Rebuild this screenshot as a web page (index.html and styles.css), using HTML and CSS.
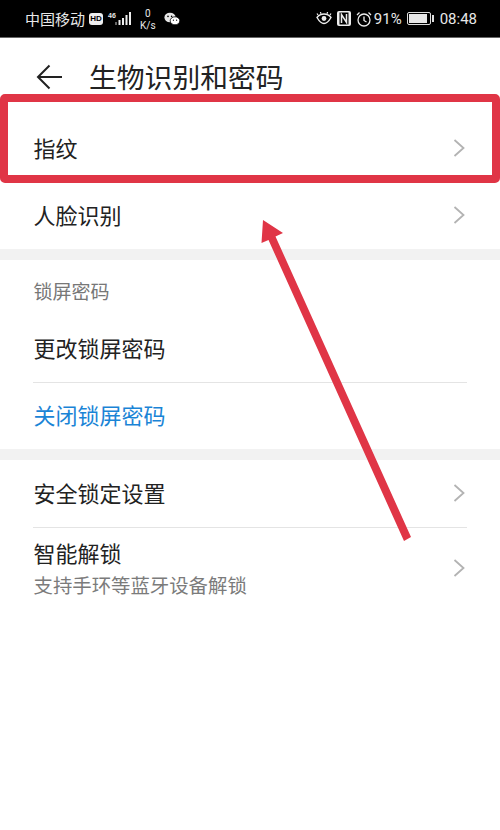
FILE: index.html
```html
<!DOCTYPE html>
<html lang="zh-CN">
<head>
    <meta charset="UTF-8">
    <meta name="viewport" content="width=device-width, initial-scale=1.0">
    <title>生物识别和密码</title>
    <link rel="stylesheet" href="styles.css">
</head>
<body>
    <div class="phone">
        <div class="status_bar">
            <div class="status_left">
                <span class="carrier">中国移动</span>
                <span class="hd_badge">HD</span>
                <span class="signal">
                    <span class="net_type">46</span>
                    <svg width="17" height="14" viewBox="0 0 17 14">
                        <rect x="0" y="10" width="2" height="3" fill="#666"/>
                        <rect x="3.5" y="8" width="2" height="5" fill="#eee"/>
                        <rect x="7" y="6" width="2" height="7" fill="#eee"/>
                        <rect x="10.5" y="3" width="2" height="10" fill="#eee"/>
                        <rect x="14" y="0" width="2" height="13" fill="#eee"/>
                    </svg>
                </span>
                <span class="speed"><span>0</span><span>K/s</span></span>
                <svg class="wechat" width="16" height="14" viewBox="0 0 16 14">
                    <ellipse cx="6" cy="5.5" rx="5.6" ry="4.8" fill="#e8e8e8"/>
                    <ellipse cx="11" cy="8.8" rx="4.8" ry="4" fill="#fff" stroke="#000" stroke-width="0.8"/>
                    <circle cx="4" cy="4.4" r="0.8" fill="#000"/>
                    <circle cx="7.6" cy="4.4" r="0.8" fill="#000"/>
                    <circle cx="9.4" cy="8.2" r="0.6" fill="#000"/>
                    <circle cx="12.6" cy="8.2" r="0.6" fill="#000"/>
                </svg>
            </div>
            <div class="status_right">
                <svg width="16" height="13" viewBox="0 0 16 13" fill="none" stroke="#eee">
                    <path d="M1 5.5C3 3 5.5 2 8 2s5 1 7 3.5C13 9 10.5 11.5 8 11.5S3 9 1 5.5z" stroke-width="1.4"/>
                    <circle cx="8" cy="6.5" r="2.4" fill="#eee" stroke="none"/>
                    <path d="M2 3 1 1.5M5 1.8 4.4 0M11 1.8 11.6 0M14 3l1-1.5" stroke-width="1.2"/>
                </svg>
                <svg class="nfc" width="14" height="15" viewBox="0 0 14 15">
                    <rect x="0" y="0" width="14" height="15" rx="2" fill="#eee"/>
                    <rect x="2.5" y="1.5" width="9" height="12" fill="#000"/>
                    <path d="M4.5 12V3.5L9.5 11.5V3" fill="none" stroke="#eee" stroke-width="1.5"/>
                </svg>
                <svg class="alarm" width="16" height="16" viewBox="0 0 16 16" fill="none" stroke="#eee" stroke-width="1.3">
                    <circle cx="8" cy="9" r="6"/>
                    <path d="M8 5.5V9.5L10.5 11"/>
                    <path d="M1 4 3.5 1.5M15 4 12.5 1.5"/>
                </svg>
                <span class="battery_pct">91%</span>
                <span class="battery"><span class="battery_fill"></span></span>
                <span class="clock">08:48</span>
            </div>
        </div>

        <div class="app_header">
            <svg class="back_icon" width="26" height="26" viewBox="0 0 26 26" fill="none" stroke="#222" stroke-width="2">
                <path d="M13.5 1.5 2 13l11.5 11.5M2 13h24"/>
            </svg>
            <h1 class="page_title">生物识别和密码</h1>
        </div>

        <div class="group">
            <div class="row">
                <span class="row_label">指纹</span>
                <svg class="chevron" width="12" height="18" viewBox="0 0 12 18"><path d="M1.5 1 10.5 9l-9 8"/></svg>
            </div>
            <div class="row">
                <span class="row_label">人脸识别</span>
                <svg class="chevron" width="12" height="18" viewBox="0 0 12 18"><path d="M1.5 1 10.5 9l-9 8"/></svg>
            </div>
        </div>

        <div class="group">
            <div class="section_title">锁屏密码</div>
            <div class="row row_line">
                <span class="row_label">更改锁屏密码</span>
            </div>
            <div class="row row_short">
                <span class="row_label row_link">关闭锁屏密码</span>
            </div>
        </div>

        <div class="group group_last">
            <div class="row row_line row_long">
                <span class="row_label">安全锁定设置</span>
                <svg class="chevron" width="12" height="18" viewBox="0 0 12 18"><path d="M1.5 1 10.5 9l-9 8"/></svg>
            </div>
            <div class="row row_tall">
                <div class="row_text">
                    <span class="row_title">智能解锁</span>
                    <span class="row_sub">支持手环等蓝牙设备解锁</span>
                </div>
                <svg class="chevron" width="12" height="18" viewBox="0 0 12 18"><path d="M1.5 1 10.5 9l-9 8"/></svg>
            </div>
        </div>

        <!-- red markup drawn on top of the screenshot -->
        <div class="red_box"></div>
        <svg class="red_arrow" width="500" height="830" viewBox="0 0 500 830">
            <path d="M263 220 283 233 275.5 236.5 411 537 404 541 268.5 240 261.5 243z" fill="#e03546"/>
        </svg>
    </div>
</body>
</html>
```

FILE: styles.css
```css
body{
    margin: 0;
    background: #fff;
    font-family: "Noto Sans CJK SC", "Liberation Sans", sans-serif;
    color: #222;
}

.phone{
    position: relative;
    width: 500px;
    height: 830px;
    overflow: hidden;
    background: #fff;
}

/* status bar */
.status_bar{
    display: flex;
    justify-content: space-between;
    align-items: center;
    height: 37px;
    padding: 0 23px 0 25px;
    background: #000;
    border-bottom: 1px solid #666;
    color: #e8e8e8;
}

.status_left, .status_right{
    display: flex;
    align-items: center;
}

.carrier{
    font-size: 15px;
    line-height: 20px;
}

.hd_badge{
    width: 14px;
    height: 12px;
    margin-left: 4px;
    border-radius: 3px;
    background: #eee;
    color: #000;
    font: bold 8px/12px "Liberation Sans", sans-serif;
    text-align: center;
}

.signal{
    display: flex;
    align-items: flex-end;
    height: 15px;
    margin-left: 5px;
}

.net_type{
    align-self: flex-start;
    margin-right: -1px;
    font: bold 7px/9px "Liberation Sans", sans-serif;
}

.speed{
    display: flex;
    flex-direction: column;
    align-items: center;
    width: 16px;
    margin-left: 8px;
    font: 10px/12px Roboto, sans-serif;
    margin-top: 2px;
}

.wechat{
    margin-left: 8px;
}

.status_right{
    gap: 5px;
}

.alarm{
    margin-right: -3px;
}

.battery_pct, .clock{
    font: 15px/20px Roboto, sans-serif;
}

.battery{
    position: relative;
    display: block;
    box-sizing: border-box;
    width: 24px;
    height: 13px;
    margin-right: 4px;
    padding: 1px;
    border: 1px solid #ddd;
    border-radius: 2px;
}

.battery::after{
    content: "";
    position: absolute;
    top: 2px;
    right: -4px;
    width: 2px;
    height: 7px;
    background: #ddd;
}

.battery_fill{
    display: block;
    width: 91%;
    height: 100%;
    background: #e8e8e8;
}

/* title row */
.app_header{
    display: flex;
    align-items: center;
    height: 77px;
    padding-left: 36px;
    box-sizing: border-box;
}

.back_icon{
    flex: none;
}

.page_title{
    margin: 0 0 2px 27px;
    font-size: 27.8px;
    font-weight: 400;
    line-height: 36px;
    color: #222;
}

/* list */
.group{
    border-bottom: 11px solid #f2f2f2;
}

.group_last{
    border-bottom: none;
}

.row{
    display: flex;
    justify-content: space-between;
    align-items: center;
    height: 67px;
    margin: 0 33px;
    padding: 0 2px 0 0.5px;
    box-sizing: border-box;
}

.row_short{
    height: 66px;
}

.row_long{
    height: 68px;
}

.row_line{
    border-bottom: 1px solid #e4e4e4;
}

.row_tall{
    height: 82px;
}

.row_text{
    display: flex;
    flex-direction: column;
    gap: 5px;
    padding-bottom: 4px;
}

.row_label{
    padding-bottom: 4px;
    font-size: 22px;
    line-height: 30px;
    color: #222;
}

.row_title{
    font-size: 22px;
    line-height: 30px;
    color: #222;
}

.row_link{
    color: #1a84d6;
}

.row_sub{
    font-size: 19.4px;
    line-height: 26px;
    color: #7b7b7b;
}

.section_title{
    height: 56px;
    margin: 0 33px;
    padding-left: 0.5px;
    font-size: 19px;
    line-height: 62px;
    color: #777;
}

.chevron{
    margin-bottom: 2px;
    fill: none;
    stroke: #b3b3b3;
    stroke-width: 1.8;
}

/* annotation overlay */
.red_box{
    position: absolute;
    top: 94px;
    left: 0;
    box-sizing: border-box;
    width: 500px;
    height: 89px;
    border: 8px solid #e03546;
    border-radius: 5px;
}

.red_arrow{
    position: absolute;
    top: 0;
    left: 0;
}
```
